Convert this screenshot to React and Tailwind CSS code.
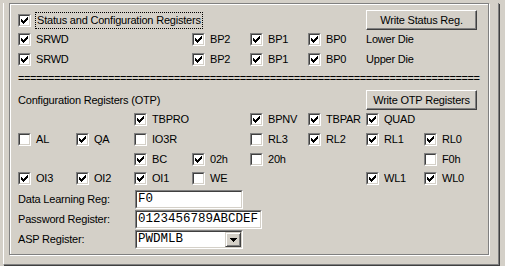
import React from 'react';

// classic 7x7 check glyph, one rect per pixel row
const CHECK_ROWS = [
  [6, 1], [5, 2], [0, 1, 4, 3], [0, 2, 3, 3], [0, 5], [1, 3], [2, 1],
];

function Check({ on }) {
  return (
    <span className="inline-block w-[13px] h-[13px] shrink-0 border border-t-[#808080] border-l-[#808080] border-b-white border-r-white">
      <span className="block w-full h-full bg-white border border-t-[#404040] border-l-[#404040] border-b-[#d4d0c8] border-r-[#d4d0c8]">
        {on && (
          <svg width="9" height="9" viewBox="0 0 9 9" className="block" shapeRendering="crispEdges">
            {CHECK_ROWS.map((r, y) => (
              <g key={y}>
                <rect x={r[0] + 1} y={y + 1} width={r[1]} height="1" fill="#000" />
                {r.length > 2 && <rect x={r[2] + 1} y={y + 1} width={r[3]} height="1" fill="#000" />}
              </g>
            ))}
          </svg>
        )}
      </span>
    </span>
  );
}

function Item({ on, label }) {
  return (
    <div className="flex items-center gap-[5px] whitespace-nowrap">
      <Check on={on} />
      <span>{label}</span>
    </div>
  );
}

function Btn({ children }) {
  return (
    <div className="w-[111px] h-[20px] flex items-center justify-center border border-t-white border-l-white border-b-[#404040] border-r-[#404040] shadow-[inset_-1px_-1px_0_#808080] whitespace-nowrap">
      {children}
    </div>
  );
}

const c = (on, label) => ({ on: !!on, label });

const statusRows = [
  [c(1, 'SRWD'), null, null, c(1, 'BP2'), c(1, 'BP1'), c(1, 'BP0'), 'Lower Die', null],
  [c(1, 'SRWD'), null, null, c(1, 'BP2'), c(1, 'BP1'), c(1, 'BP0'), 'Upper Die', null],
];

const otpRows = [
  [null, null, c(1, 'TBPRO'), null, c(1, 'BPNV'), c(1, 'TBPAR'), c(1, 'QUAD'), null],
  [c(0, 'AL'), c(1, 'QA'), c(0, 'IO3R'), null, c(0, 'RL3'), c(1, 'RL2'), c(1, 'RL1'), c(1, 'RL0')],
  [null, null, c(1, 'BC'), c(1, '02h'), c(0, '20h'), null, null, c(0, 'F0h')],
  [c(1, 'OI3'), c(1, 'OI2'), c(1, 'OI1'), c(0, 'WE'), null, null, c(1, 'WL1'), c(1, 'WL0')],
];

function Row({ cells, h }) {
  return (
    <div className={'grid grid-cols-[repeat(8,58px)] items-center ' + h}>
      {cells.map((cell, i) => (
        <div key={i} className="flex items-center whitespace-nowrap">
          {cell && (typeof cell === 'string' ? <span>{cell}</span> : <Item on={cell.on} label={cell.label} />)}
        </div>
      ))}
    </div>
  );
}

const mono = "font-['Liberation_Mono','Courier_New',monospace] text-[12.5px] tracking-normal";

export default function App() {
  return (
    <div className="w-[505px] h-[266px] bg-[#d4d0c8] overflow-hidden text-black text-[11px] leading-none tracking-[-0.2px] font-['Liberation_Sans',Arial,sans-serif]">
      <div className="ml-[3px] w-[496px] h-[262px] border-l border-r border-b border-l-white border-r-[#808080] border-b-[#808080] shadow-[1px_1px_0_#404040]">
        <div className="ml-[5px] mt-[3px] w-[480px] h-[252px] border border-[#808080] shadow-[1px_1px_0_#fff,inset_1px_1px_0_#fff] pl-[8px] pr-[11px] pt-[6px] flex flex-col">
          {/* status register header */}
          <div className="h-[20px] flex items-center">
            <Check on />
            <span className="ml-[4px] px-[1px] py-[2px] border border-dotted border-black">Status and Configuration Registers</span>
            <div className="ml-auto">
              <Btn>Write Status Reg.</Btn>
            </div>
          </div>
          <Row cells={statusRows[0]} h="h-[19px]" />
          <Row cells={statusRows[1]} h="h-[20px]" />
          <div className="h-[18px] -mr-[8px] flex items-center whitespace-nowrap tracking-[-0.43px]">
            {'='.repeat(77)}
          </div>

          {/* OTP configuration */}
          <div className="mt-[3px] h-[20px] flex items-center">
            <span>Configuration Registers (OTP)</span>
            <div className="ml-auto">
              <Btn>Write OTP Registers</Btn>
            </div>
          </div>
          <Row cells={otpRows[0]} h="h-[19px]" />
          <Row cells={otpRows[1]} h="h-[20px]" />
          <Row cells={otpRows[2]} h="h-[20px]" />
          <Row cells={otpRows[3]} h="h-[19px]" />

          <div className="mt-[2px] flex flex-col gap-[1px]">
            <div className="h-[19px] flex items-center">
              <span className="w-[117px]">Data Learning Reg:</span>
              <div className="w-[108px] h-[19px] bg-white border border-t-[#808080] border-l-[#808080] border-b-white border-r-white">
                <div className={'h-full flex items-center pl-[1px] border border-t-[#404040] border-l-[#404040] border-b-[#d4d0c8] border-r-[#d4d0c8] ' + mono}>
                  F0
                </div>
              </div>
            </div>
            <div className="h-[19px] flex items-center">
              <span className="w-[117px]">Password Register:</span>
              <div className="w-[127px] h-[19px] bg-white border border-t-[#808080] border-l-[#808080] border-b-white border-r-white">
                <div className={'h-full flex items-center pl-[1px] border border-t-[#404040] border-l-[#404040] border-b-[#d4d0c8] border-r-[#d4d0c8] ' + mono}>
                  0123456789ABCDEF
                </div>
              </div>
            </div>
            <div className="h-[19px] flex items-center">
              <span className="w-[117px]">ASP Register:</span>
              <div className="w-[108px] h-[19px] bg-white border border-t-[#808080] border-l-[#808080] border-b-white border-r-white">
                <div className={'h-full flex items-center pl-[1px] border border-t-[#404040] border-l-[#404040] border-b-[#d4d0c8] border-r-[#d4d0c8] ' + mono}>
                  <span className="flex-1">PWDMLB</span>
                  <div className="w-[16px] h-full bg-[#d4d0c8] flex items-center justify-center border border-t-[#d4d0c8] border-l-[#d4d0c8] border-b-[#404040] border-r-[#404040] shadow-[inset_1px_1px_0_#fff,inset_-1px_-1px_0_#808080]">
                    <svg width="7" height="4" viewBox="0 0 7 4" shapeRendering="crispEdges">
                      <rect x="0" y="0" width="7" height="1" fill="#000" />
                      <rect x="1" y="1" width="5" height="1" fill="#000" />
                      <rect x="2" y="2" width="3" height="1" fill="#000" />
                      <rect x="3" y="3" width="1" height="1" fill="#000" />
                    </svg>
                  </div>
                </div>
              </div>
            </div>
          </div>
        </div>
      </div>
    </div>
  );
}
